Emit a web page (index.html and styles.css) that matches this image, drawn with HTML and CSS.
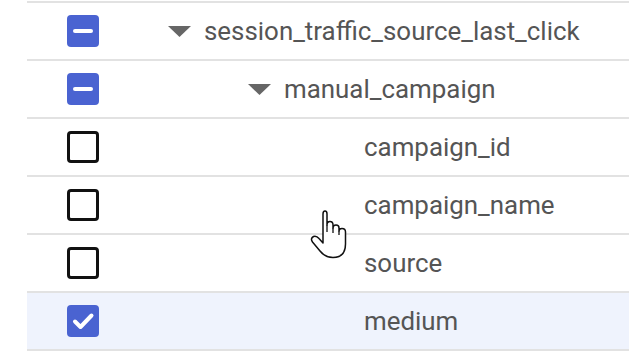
FILE: index.html
```html
<!DOCTYPE html>
<html>
<head>
<meta charset="utf-8">
<link rel="stylesheet" href="styles.css">
</head>
<body>
<div class="tree">
  <div class="row">
    <span class="cb cb-mixed"><span class="bar"></span></span>
    <span class="name lvl0"><span class="toggle"><svg width="23" height="11" viewBox="0 0 23 11"><polygon points="0,0 23,0 11.5,11" fill="#666"/></svg></span>session_traffic_source_last_click</span>
  </div>
  <div class="row">
    <span class="cb cb-mixed"><span class="bar"></span></span>
    <span class="name lvl1"><span class="toggle"><svg width="23" height="11" viewBox="0 0 23 11"><polygon points="0,0 23,0 11.5,11" fill="#666"/></svg></span>manual_campaign</span>
  </div>
  <div class="row">
    <span class="cb"></span>
    <span class="name lvl2">campaign_id</span>
  </div>
  <div class="row">
    <span class="cb"></span>
    <span class="name lvl2">campaign_name</span>
  </div>
  <div class="row">
    <span class="cb"></span>
    <span class="name lvl2">source</span>
  </div>
  <div class="row selected">
    <span class="cb cb-checked"><svg width="32" height="32" viewBox="0 0 32 32"><polyline points="8,16.5 13.5,22 24.5,10.5" fill="none" stroke="#fff" stroke-width="4" stroke-linecap="round" stroke-linejoin="round"/></svg></span>
    <span class="name lvl2">medium</span>
  </div>
</div>
<svg class="cursor" width="42" height="54" viewBox="308 207 42 54">
  <path d="M323 238 L323 214 Q323 211 325 211 Q327 211 327 214 L327 225 Q327 221.5 330 221.5 Q333 221.5 333 225 L333 228 Q333 225 336 225 Q339 225 339 228 L339 231 Q339 228.5 342 228.5 Q345.5 228.5 345.5 232 L345.5 244 Q345.5 257.5 333 257.5 Q325 257.5 320 251 L312.5 242 Q310 238.5 313.5 236.5 Q316.5 235.5 319 238.5 L323 243 Z" fill="#fff" stroke="#111" stroke-width="1.5" stroke-linejoin="round"/>
  <path d="M327 225 L327 232 M333 228 L333 233 M339 231 L339 235" fill="none" stroke="#111" stroke-width="1.3"/>
</svg>
</body>
</html>
```
FILE: styles.css
```css
html, body {
  margin: 0;
  padding: 0;
  background: #fff;
}
body {
  padding-top: 1px;
  font-family: Roboto, "Noto Sans", sans-serif;
}
.tree {
  margin-left: 27px;
  border-top: 2px solid #e2e2e2;
}
.row {
  display: flex;
  align-items: center;
  height: 56px;
  border-bottom: 2px solid #e2e2e2;
  padding-left: 40px;
}
.row.selected {
  background: #eff3fd;
}
.cb {
  width: 32px;
  height: 32px;
  box-sizing: border-box;
  border: 3.5px solid #111;
  border-radius: 4px;
  flex: none;
  display: flex;
  align-items: center;
  justify-content: center;
}
.cb-mixed, .cb-checked {
  border: none;
  background: #4a63d1;
}
.bar {
  width: 20px;
  height: 4.5px;
  border-radius: 2px;
  background: #fff;
}
.name {
  display: flex;
  align-items: center;
  margin-left: 69px;
  font-size: 25.9px;
  color: #555;
}
.name.lvl1 { padding-left: 80px; }
.name.lvl2 { padding-left: 196px; }
.toggle {
  width: 36px;
  flex: none;
  display: flex;
  align-items: center;
}
.cursor {
  position: absolute;
  left: 308px;
  top: 207px;
}
```
